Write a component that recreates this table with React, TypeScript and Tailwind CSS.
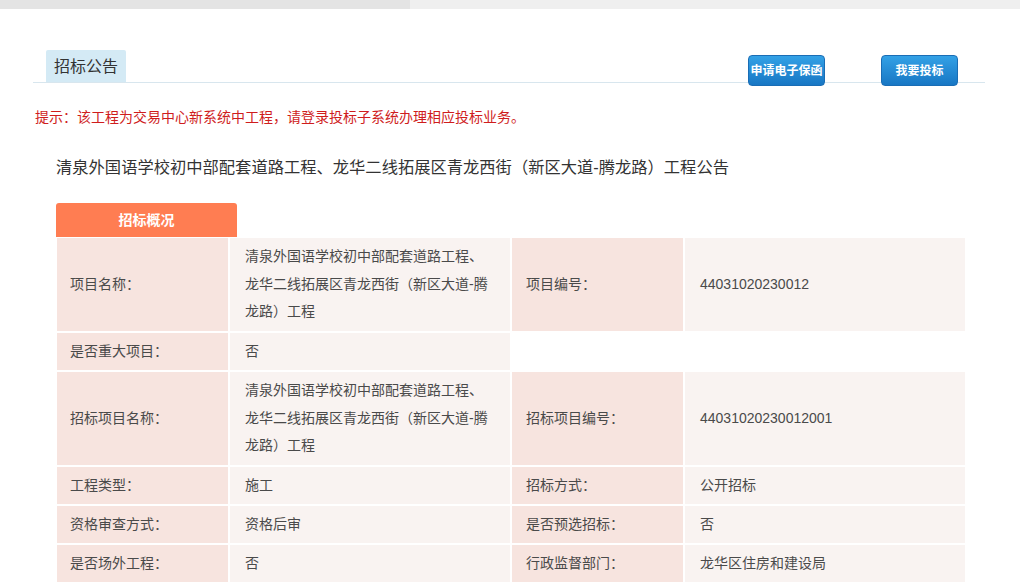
const FONT = "font-['Liberation_Sans','Noto_Sans_CJK_SC',sans-serif]";

type Cell = { label: string; value: string } | null;

const rows: { cells: [Cell, Cell] }[] = [
  {
    cells: [
      { label: "项目名称：", value: "清泉外国语学校初中部配套道路工程、龙华二线拓展区青龙西街（新区大道-腾龙路）工程" },
      { label: "项目编号：", value: "44031020230012" },
    ],
  },
  { cells: [{ label: "是否重大项目：", value: "否" }, null] },
  {
    cells: [
      { label: "招标项目名称：", value: "清泉外国语学校初中部配套道路工程、龙华二线拓展区青龙西街（新区大道-腾龙路）工程" },
      { label: "招标项目编号：", value: "44031020230012001" },
    ],
  },
  { cells: [{ label: "工程类型：", value: "施工" }, { label: "招标方式：", value: "公开招标" }] },
  { cells: [{ label: "资格审查方式：", value: "资格后审" }, { label: "是否预选招标：", value: "否" }] },
  { cells: [{ label: "是否场外工程：", value: "否" }, { label: "行政监督部门：", value: "龙华区住房和建设局" }] },
];

function InfoTable() {
  return (
    <div className="ml-[57px] mt-[1px] grid w-[908px] grid-cols-[171px_280px_171px_280px] grid-rows-[93px_37px_93px_37px_37px_37px] gap-[2px] bg-white text-[14px] leading-[27.5px] text-[#4a4a4a]">
      {rows.map((row, i) =>
        row.cells.map((cell, j) =>
          cell ? (
            <>
              <div key={`l${i}${j}`} className={`flex items-center bg-[#f7e4df] ${j === 0 ? "pl-[13px]" : "pl-[14px]"}`}>
                {cell.label}
              </div>
              <div key={`v${i}${j}`} className="flex items-center bg-[#f9f3f1] pl-[15px] pr-[17px]">
                {cell.value}
              </div>
            </>
          ) : (
            <>
              <div key={`e${i}${j}a`} className="bg-white" />
              <div key={`e${i}${j}b`} className="bg-white" />
            </>
          )
        )
      )}
    </div>
  );
}

export default function App() {
  return (
    <div className={`min-h-[585px] w-[1020px] bg-white ${FONT}`}>
      {/* top strip */}
      <div className="flex h-[9px]">
        <div className="w-[410px] bg-[#e4e4e4]" />
        <div className="flex-1 bg-[#efefef]" />
      </div>

      <div className="ml-[33px] mt-[41px] w-[952px]">
        {/* header with tab and buttons */}
        <div className="flex h-[33px] items-start border-b border-[#d8e6ee]">
          <div className="ml-[13px] h-[32px] rounded-t-[2px] bg-[#d4eaf5] px-[8px] pt-[2px] text-[16px] leading-[30px] text-[#333]">
            招标公告
          </div>
          <div className="ml-auto mr-[27px] mt-[5px] flex gap-[56px]">
            <button className="h-[31px] w-[77px] rounded-[4px] border border-[#1a6db5] bg-gradient-to-b from-[#33a1e6] to-[#1877c4] text-[12px] font-bold text-white">
              申请电子保函
            </button>
            <button className="h-[31px] w-[77px] rounded-[4px] border border-[#1a6db5] bg-gradient-to-b from-[#33a1e6] to-[#1877c4] text-[12px] font-bold text-white">
              我要投标
            </button>
          </div>
        </div>

        <div className="ml-[2px] mt-[25px] text-[14px] leading-[18px] text-[#cf1d1d]">
          提示：该工程为交易中心新系统中工程，请登录投标子系统办理相应投标业务。
        </div>

        <div className="ml-[23px] mt-[29px] text-[16.3px] leading-[24px] text-[#333]">
          清泉外国语学校初中部配套道路工程、龙华二线拓展区青龙西街（新区大道-腾龙路）工程公告
        </div>
      </div>

      <div className="ml-[56px] mt-[24px] flex h-[34px] w-[181px] items-center justify-center rounded-t-[3px] bg-[#ff7d52] text-[14px] font-bold text-white">
        招标概况
      </div>
      <div className="pb-[4px]">
        <InfoTable />
      </div>
    </div>
  );
}
